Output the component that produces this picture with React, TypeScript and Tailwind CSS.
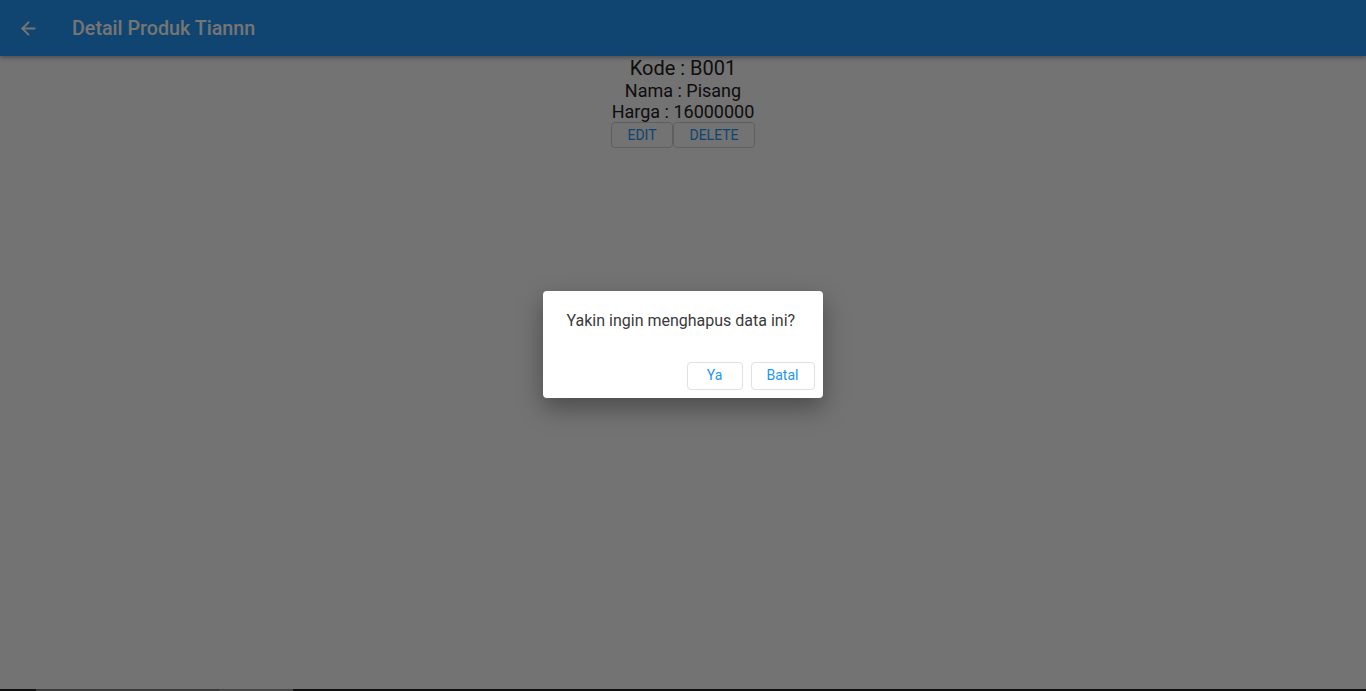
import { ArrowLeft } from "lucide-react";

const App = () => {
    return <div className="relative h-[691px] w-full overflow-hidden bg-[#fafafa] flex flex-col" style={{fontFamily: "Roboto, 'Liberation Sans', sans-serif"}}>
        <header className="h-14 shrink-0 bg-[#2196F3] flex items-center shadow-[0_2px_4px_rgba(0,0,0,0.3)] z-10">
            <ArrowLeft className="ml-[18px] w-[21px] h-[21px] text-white" strokeWidth={2.2} />
            <h1 className="ml-[33px] mt-[2px] text-white text-[19.7px] font-medium">Detail Produk Tiannn</h1>
        </header>
        <main className="flex-1 flex flex-col items-center text-[#212121]">
            <p className="text-[20px] leading-[24px]">Kode : B001</p>
            <p className="text-[18px] leading-[21px]">Nama : Pisang</p>
            <p className="text-[18px] leading-[21px]">Harga : 16000000</p>
            <div className="flex">
                <button className="h-[26px] w-[62px] border border-[#d0d0d0] rounded text-[14px] text-[#2196F3]">EDIT</button>
                <button className="h-[26px] w-[82px] border border-[#d0d0d0] rounded text-[14px] text-[#2196F3]">DELETE</button>
            </div>
        </main>
        <div className="absolute inset-0 z-20 bg-black/[0.54] grid place-items-center">
            <div className="w-[280px] bg-white rounded shadow-[0_10px_24px_rgba(0,0,0,0.35)] mt-[-3px] ml-[-1px]">
                <p className="px-6 pt-5 pb-6 text-[16px] leading-[19px] text-[#3a3a3a]">Yakin ingin menghapus data ini?</p>
                <div className="flex justify-end gap-2 p-2">
                    <button className="h-[28px] w-[56px] border border-[#e0e0e0] rounded text-[14px] text-[#2196F3]">Ya</button>
                    <button className="h-[28px] w-[64px] border border-[#e0e0e0] rounded text-[14px] text-[#2196F3]">Batal</button>
                </div>
            </div>
        </div>
        <div className="absolute bottom-0 left-0 right-0 h-[2px] z-30 flex bg-[#111]">
            <div className="ml-[36px] w-[183px] bg-[#3a3a3a]" />
            <div className="w-[74px] bg-[#444]" />
        </div>
    </div>
}

export default App;
